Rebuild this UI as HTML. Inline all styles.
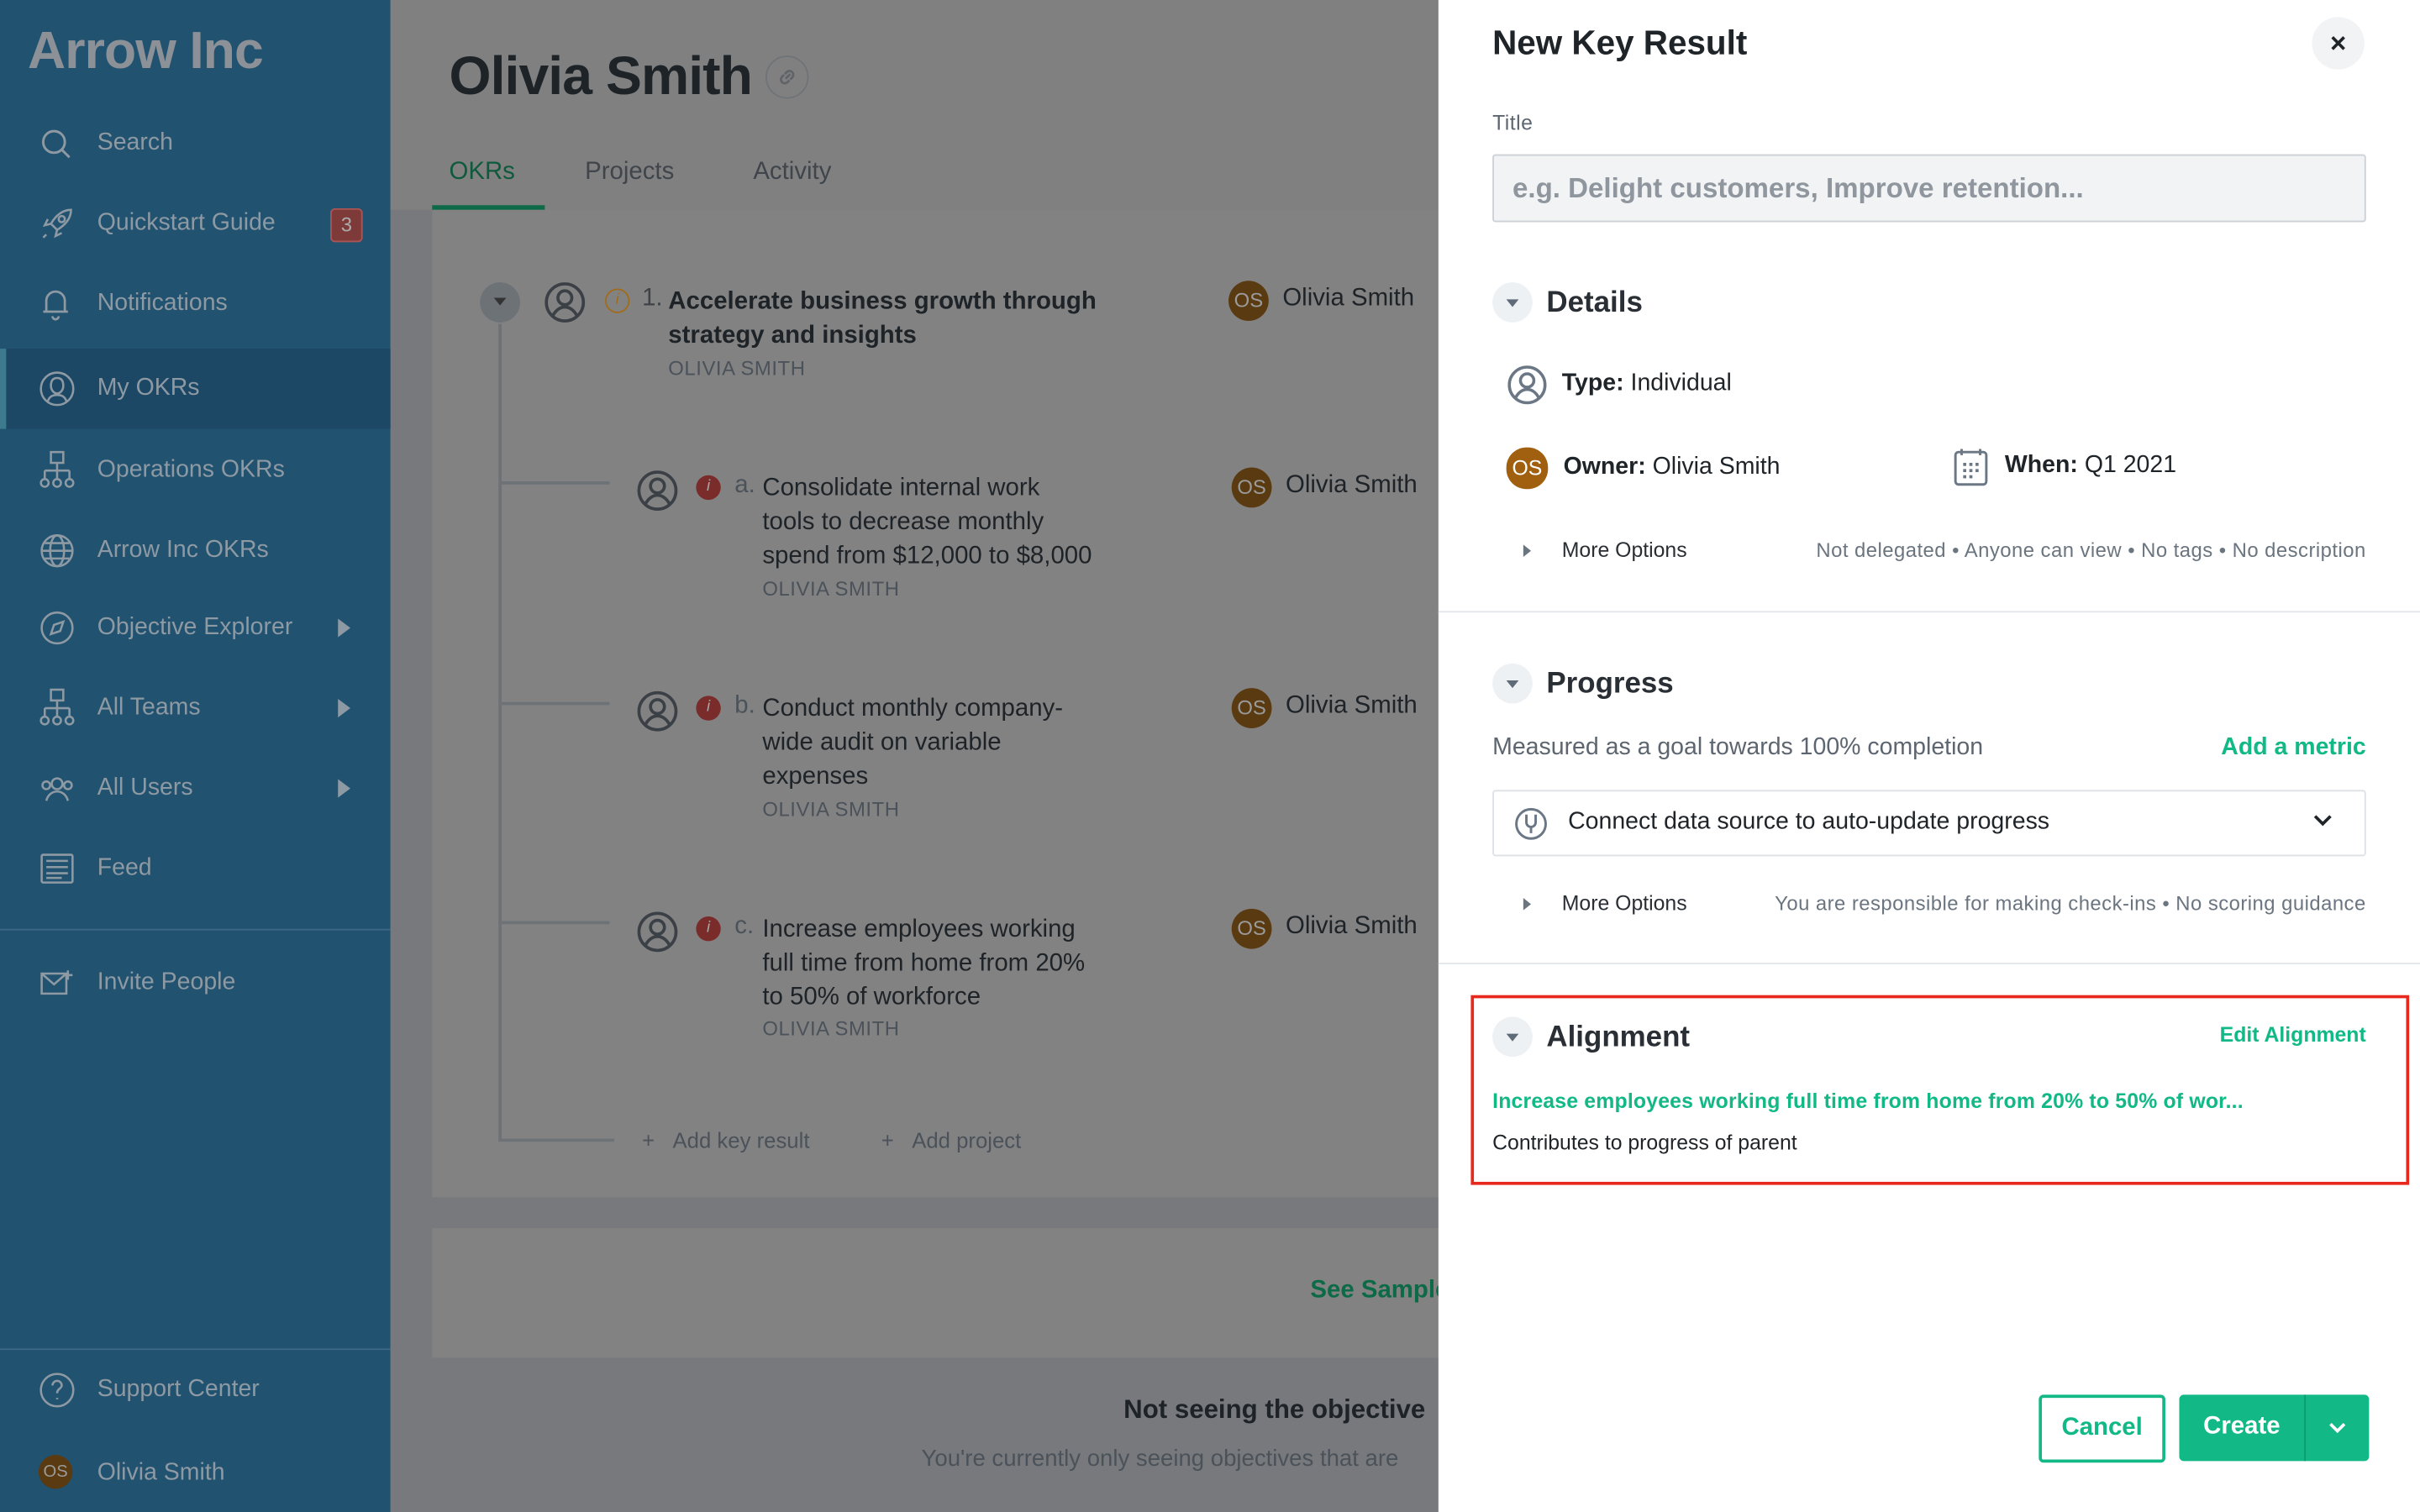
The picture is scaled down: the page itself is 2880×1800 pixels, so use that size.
<!DOCTYPE html>
<html><head><meta charset="utf-8"><style>
html,body{margin:0;padding:0;width:2880px;height:1800px;overflow:hidden;background:#7b7d80}
#w{width:1568px;height:980px;transform:scale(1.836735);transform-origin:0 0;position:relative;font-family:"Liberation Sans",sans-serif;overflow:hidden}
.abs{position:absolute;white-space:nowrap}
#side{left:0;top:0;width:253px;height:980px;background:#215270;color:#8e9aa3}
.logo{left:18px;top:14px;font-size:34px;font-weight:bold;color:#8b9197;letter-spacing:-0.5px}
.ni{position:absolute;left:0;width:253px;height:50px;font-size:15.5px;color:#8d99a3}
.ni span{position:absolute;left:63px;top:50%;transform:translateY(-50%)}
.ni svg{position:absolute;left:25px;top:50%;transform:translateY(-50%)}
.arr{position:absolute;left:219px;top:50%;margin-top:-6px;border-left:8px solid #8d99a3;border-top:6px solid transparent;border-bottom:6px solid transparent}
#main{left:253px;top:0;width:680px;height:980px;background:#77797c}
.hdr{left:0;top:0;width:680px;height:136px;background:#808080}
.card{background:#828282}
.t{color:#1e2328}
.g{color:#4b525a}
.wrap{white-space:normal}
#panel{left:932px;top:0;width:636px;height:980px;background:#fff;color:#1f2429}
.sec{font-size:19px;font-weight:bold;color:#2a2f35}
.cv{position:absolute;width:26px;height:26px;border-radius:13px;background:#eef1f4}
.cv:after{content:"";position:absolute;left:9px;top:11px;border-top:5px solid #5f6b78;border-left:4px solid transparent;border-right:4px solid transparent}
.small{font-size:13px;color:#6b7580;letter-spacing:0.25px}
.green{color:#12b886}
.tri{position:absolute;border-left:5px solid #6b7580;border-top:4px solid transparent;border-bottom:4px solid transparent}
.av{position:absolute;width:26px;height:26px;border-radius:13px;background:#a0600f;color:#fff;font-size:13px;text-align:center;line-height:26px}
.avd{background:#5a3a10;color:#9a9a9a}
</style></head><body><div id="w">
<div id="side" class="abs">
<div class="abs logo">Arrow Inc</div>
<div class="ni" style="top:68px"><svg width="22" height="22" viewBox="0 0 22 22" fill="none" stroke="#8d99a3" stroke-width="1.6"><circle cx="10" cy="10" r="7"/><path d="M15 15l5 5"/></svg><span>Search</span></div>
<div class="ni" style="top:120px"><svg width="24" height="24" viewBox="0 0 24 24" fill="none" stroke="#8d99a3" stroke-width="1.4"><path d="M21 3c-6 0-10 4-13 9l4 4c5-3 9-7 9-13zM8 12l-4 1 2-4M12 16l-1 4 4-2M5 19l-2 2"/><circle cx="15" cy="9" r="2"/></svg><span>Quickstart Guide</span><div class="abs" style="left:214px;top:15px;width:19px;height:20px;background:#7e3a38;border:1px solid #a55;border-radius:3px;color:#aaa;font-size:13px;text-align:center;line-height:20px">3</div></div>
<div class="ni" style="top:172px"><svg width="22" height="22" viewBox="0 0 22 22" fill="none" stroke="#8d99a3" stroke-width="1.5"><path d="M5 16V9a6 6 0 0112 0v7H5zM3 16h16M9 19a2 2 0 004 0"/></svg><span>Notifications</span></div>
<div class="ni" style="top:226px;height:52px;background:#1c4866;border-left:4px solid #3e7a8e"><svg width="24" height="24" viewBox="0 0 24 24" fill="none" stroke="#8d99a3" stroke-width="1.4" style="left:21px"><circle cx="12" cy="12" r="10.5"/><path d="M12 5c-3 0-4 2-4 5s2 5 4 5 4-2 4-5-1-5-4-5zM6 20c1-3 3-4 6-4s5 1 6 4"/></svg><span style="left:59px">My OKRs</span></div>
<div class="ni" style="top:280px"><svg width="24" height="26" viewBox="0 0 24 26" fill="none" stroke="#8d99a3" stroke-width="1.4"><rect x="8" y="1" width="8" height="7"/><path d="M12 8v5M4 13h16M4 13v5M12 13v5M20 13v5"/><circle cx="4" cy="21" r="2.5"/><circle cx="12" cy="21" r="2.5"/><circle cx="20" cy="21" r="2.5"/></svg><span>Operations OKRs</span></div>
<div class="ni" style="top:332px"><svg width="24" height="24" viewBox="0 0 24 24" fill="none" stroke="#8d99a3" stroke-width="1.4"><circle cx="12" cy="12" r="10"/><ellipse cx="12" cy="12" rx="4.5" ry="10"/><path d="M2 12h20M4 7h16M4 17h16"/></svg><span>Arrow Inc OKRs</span></div>
<div class="ni" style="top:382px"><svg width="24" height="24" viewBox="0 0 24 24" fill="none" stroke="#8d99a3" stroke-width="1.4"><circle cx="12" cy="12" r="10"/><path d="M16 8l-2 6-6 2 2-6z"/></svg><span>Objective Explorer</span><div class="arr"></div></div>
<div class="ni" style="top:434px"><svg width="24" height="26" viewBox="0 0 24 26" fill="none" stroke="#8d99a3" stroke-width="1.4"><rect x="8" y="1" width="8" height="7"/><path d="M12 8v5M4 13h16M4 13v5M12 13v5M20 13v5"/><circle cx="4" cy="21" r="2.5"/><circle cx="12" cy="21" r="2.5"/><circle cx="20" cy="21" r="2.5"/></svg><span>All Teams</span><div class="arr"></div></div>
<div class="ni" style="top:486px"><svg width="24" height="22" viewBox="0 0 24 22" fill="none" stroke="#8d99a3" stroke-width="1.4"><circle cx="12" cy="8" r="3.5"/><path d="M5 19c1-4 4-6 7-6s6 2 7 6"/><circle cx="5" cy="9" r="2.5"/><circle cx="19" cy="9" r="2.5"/></svg><span>All Users</span><div class="arr"></div></div>
<div class="ni" style="top:538px"><svg width="24" height="22" viewBox="0 0 24 22" fill="none" stroke="#8d99a3" stroke-width="1.4"><rect x="2" y="2" width="20" height="18" rx="1"/><path d="M5 6h14M5 10h14M5 14h14M5 17h10"/></svg><span>Feed</span></div>
<div class="abs" style="left:0;top:602px;width:253px;height:1px;background:#3d6885"></div>
<div class="ni" style="top:612px"><svg width="24" height="20" viewBox="0 0 24 20" fill="none" stroke="#8d99a3" stroke-width="1.4"><path d="M2 4h16v13H2zM2 4l8 7 8-7M19 2v6M16 5h6"/></svg><span>Invite People</span></div>
<div class="abs" style="left:0;top:874px;width:253px;height:1px;background:#3d6885"></div>
<div class="ni" style="top:876px"><svg width="24" height="24" viewBox="0 0 24 24" fill="none" stroke="#8d99a3" stroke-width="1.4"><circle cx="12" cy="12" r="10.5"/><path d="M9 9a3 3 0 116 0c0 2-3 2-3 5M12 17v1"/></svg><span>Support Center</span></div>
<div class="ni" style="top:930px"><div class="av avd" style="left:25px;top:13px;width:22px;height:22px;line-height:22px;font-size:11px">OS</div><span>Olivia Smith</span></div>
</div>

<div id="main" class="abs">
<div class="abs hdr"></div>
<div class="abs t" style="left:38px;top:30px;font-size:35px;font-weight:bold;letter-spacing:-0.5px">Olivia Smith</div>
<div class="abs" style="left:243px;top:36px;width:26px;height:26px;border:1px solid #6f7378;border-radius:14px"></div>
<svg class="abs" style="left:249px;top:42px" width="16" height="16" viewBox="0 0 16 16" fill="none" stroke="#5f6469" stroke-width="1.5"><path d="M7 9l3-3M6 6.5L4.5 8a2.5 2.5 0 003.5 3.5L9.5 10M10 9.5L11.5 8A2.5 2.5 0 008 4.5L6.5 6"/></svg>
<div class="abs" style="left:38px;top:103px;font-size:16px;color:#0f5a3d">OKRs</div>
<div class="abs" style="left:27px;top:133px;width:73px;height:3px;background:#0d6a47"></div>
<div class="abs g" style="left:126px;top:103px;font-size:16px;color:#3f454b">Projects</div>
<div class="abs g" style="left:235px;top:103px;font-size:16px;color:#3f454b">Activity</div>
<div class="abs card" style="left:27px;top:136px;width:660px;height:640px"></div>
<div class="abs" style="left:70px;top:210px;width:2px;height:528px;background:#6d7277"></div>
<div class="abs" style="left:70px;top:738px;width:75px;height:2px;background:#6d7277"></div>
<div class="abs" style="left:58px;top:183px;width:26px;height:26px;border-radius:13px;background:#6d7277"></div>
<div class="abs" style="left:67px;top:193px;border-top:5px solid #333;border-left:4px solid transparent;border-right:4px solid transparent"></div>
<svg class="abs" style="left:99px;top:182px" width="28" height="28" viewBox="0 0 28 28" fill="none" stroke="#3a4046" stroke-width="2"><circle cx="14" cy="14" r="12"/><circle cx="14" cy="11" r="4.5"/><path d="M6 23c2-4 5-6 8-6s6 2 8 6"/></svg>
<div class="abs" style="left:139px;top:187px;width:14px;height:14px;border:1.5px solid #a16c1a;border-radius:9px;color:#a16c1a;font-size:10px;text-align:center;line-height:14px;font-style:italic">i</div>
<div class="abs" style="left:163px;top:185px;font-size:16px;color:#3d4349">1.</div>
<div class="abs t wrap" style="left:180px;top:185px;font-size:16px;font-weight:bold;line-height:22px;width:290px">Accelerate business growth through strategy and insights</div>
<div class="abs g" style="left:180px;top:231px;font-size:13px;letter-spacing:0.3px">OLIVIA SMITH</div>
<div class="av avd" style="left:543px;top:182px">OS</div>
<div class="abs t" style="left:578px;top:185px;font-size:16px">Olivia Smith</div>

<div class="abs" style="left:72px;top:312px;width:70px;height:2px;background:#6d7277"></div>
<div class="abs" style="left:72px;top:455px;width:70px;height:2px;background:#6d7277"></div>
<div class="abs" style="left:72px;top:597px;width:70px;height:2px;background:#6d7277"></div>

<svg class="abs" style="left:159px;top:304px" width="28" height="28" viewBox="0 0 28 28" fill="none" stroke="#3a4046" stroke-width="2"><circle cx="14" cy="14" r="12"/><circle cx="14" cy="11" r="4.5"/><path d="M6 23c2-4 5-6 8-6s6 2 8 6"/></svg>
<div class="abs" style="left:198px;top:308px;width:16px;height:16px;border-radius:8px;background:#7a2c2a;color:#aaa;font-size:10px;text-align:center;line-height:16px;font-style:italic">i</div>
<div class="abs g" style="left:223px;top:306px;font-size:16px">a.</div>
<div class="abs t wrap" style="left:241px;top:306px;font-size:16px;line-height:22px;width:215px">Consolidate internal work tools to decrease monthly spend from $12,000 to $8,000</div>
<div class="abs g" style="left:241px;top:374px;font-size:13px;letter-spacing:0.3px">OLIVIA SMITH</div>
<div class="av avd" style="left:545px;top:303px">OS</div>
<div class="abs t" style="left:580px;top:306px;font-size:16px">Olivia Smith</div>

<svg class="abs" style="left:159px;top:447px" width="28" height="28" viewBox="0 0 28 28" fill="none" stroke="#3a4046" stroke-width="2"><circle cx="14" cy="14" r="12"/><circle cx="14" cy="11" r="4.5"/><path d="M6 23c2-4 5-6 8-6s6 2 8 6"/></svg>
<div class="abs" style="left:198px;top:451px;width:16px;height:16px;border-radius:8px;background:#7a2c2a;color:#aaa;font-size:10px;text-align:center;line-height:16px;font-style:italic">i</div>
<div class="abs g" style="left:223px;top:449px;font-size:16px">b.</div>
<div class="abs t wrap" style="left:241px;top:449px;font-size:16px;line-height:22px;width:210px">Conduct monthly company-wide audit on variable expenses</div>
<div class="abs g" style="left:241px;top:517px;font-size:13px;letter-spacing:0.3px">OLIVIA SMITH</div>
<div class="av avd" style="left:545px;top:446px">OS</div>
<div class="abs t" style="left:580px;top:449px;font-size:16px">Olivia Smith</div>

<svg class="abs" style="left:159px;top:590px" width="28" height="28" viewBox="0 0 28 28" fill="none" stroke="#3a4046" stroke-width="2"><circle cx="14" cy="14" r="12"/><circle cx="14" cy="11" r="4.5"/><path d="M6 23c2-4 5-6 8-6s6 2 8 6"/></svg>
<div class="abs" style="left:198px;top:594px;width:16px;height:16px;border-radius:8px;background:#7a2c2a;color:#aaa;font-size:10px;text-align:center;line-height:16px;font-style:italic">i</div>
<div class="abs g" style="left:223px;top:592px;font-size:16px">c.</div>
<div class="abs t wrap" style="left:241px;top:592px;font-size:16px;line-height:22px;width:225px">Increase employees working full time from home from 20% to 50% of workforce</div>
<div class="abs g" style="left:241px;top:659px;font-size:13px;letter-spacing:0.3px">OLIVIA SMITH</div>
<div class="av avd" style="left:545px;top:589px">OS</div>
<div class="abs t" style="left:580px;top:592px;font-size:16px">Olivia Smith</div>

<div class="abs g" style="left:163px;top:731px;font-size:14px">+&nbsp;&nbsp;&nbsp;Add key result</div>
<div class="abs g" style="left:318px;top:731px;font-size:14px">+&nbsp;&nbsp;&nbsp;Add project</div>

<div class="abs card" style="left:27px;top:796px;width:660px;height:84px"></div>
<div class="abs" style="left:596px;top:828px;font-size:16px;font-weight:bold;color:#0d6a47">See Sample</div>
<div class="abs t" style="left:475px;top:904px;font-size:17px;font-weight:bold">Not seeing the objective</div>
<div class="abs g" style="left:344px;top:937px;font-size:15px">You're currently only seeing objectives that are</div>
</div>

<div id="panel" class="abs">
<div class="abs" style="left:35px;top:15px;font-size:22px;font-weight:bold;color:#1f2429">New Key Result</div>
<div class="abs" style="left:566px;top:11px;width:34px;height:34px;border-radius:17px;background:#f1f3f5;text-align:center;line-height:34px;font-size:18px;font-weight:bold">×</div>
<div class="abs small" style="left:35px;top:72px;color:#5d6670;font-size:13.5px">Title</div>
<div class="abs" style="left:35px;top:100px;width:564px;height:42px;border:1px solid #ccd1d6;background:#f1f3f5;border-radius:2px"></div>
<div class="abs" style="left:48px;top:112px;font-size:18px;color:#8f969d;font-weight:bold">e.g. Delight customers, Improve retention...</div>

<div class="cv" style="left:35px;top:183px"></div>
<div class="abs sec" style="left:70px;top:186px">Details</div>
<svg class="abs" style="left:44px;top:236px" width="27" height="27" viewBox="0 0 28 28" fill="none" stroke="#6b7785" stroke-width="2"><circle cx="14" cy="14" r="12"/><circle cx="14" cy="11" r="4.5"/><path d="M6 23c2-4 5-6 8-6s6 2 8 6"/></svg>
<div class="abs" style="left:80px;top:240px;font-size:15.5px"><b style="font-weight:600">Type:</b> Individual</div>
<div class="av" style="left:44px;top:290px;width:27px;height:27px;line-height:27px;font-size:13.5px">OS</div>
<div class="abs" style="left:81px;top:294px;font-size:15.5px"><b style="font-weight:600">Owner:</b> Olivia Smith</div>
<svg class="abs" style="left:334px;top:290px" width="22" height="26" viewBox="0 0 22 26" fill="none" stroke="#6b7785" stroke-width="1.6"><rect x="1" y="3" width="20" height="21" rx="2"/><path d="M5 1v4M17 1v4" /><g fill="#6b7785" stroke="none"><rect x="6" y="10" width="2" height="2"/><rect x="10" y="10" width="2" height="2"/><rect x="14" y="10" width="2" height="2"/><rect x="6" y="14" width="2" height="2"/><rect x="10" y="14" width="2" height="2"/><rect x="14" y="14" width="2" height="2"/><rect x="6" y="18" width="2" height="2"/><rect x="10" y="18" width="2" height="2"/></g></svg>
<div class="abs" style="left:367px;top:293px;font-size:15.5px"><b style="font-weight:600">When:</b> Q1 2021</div>
<div class="tri" style="left:55px;top:353px"></div>
<div class="abs" style="left:80px;top:349px;font-size:13.5px;color:#2a2f35">More Options</div>
<div class="abs small" style="right:35px;top:349px">Not delegated • Anyone can view • No tags • No description</div>
<div class="abs" style="left:0;top:396px;width:636px;height:1px;background:#e3e6ea"></div>

<div class="cv" style="left:35px;top:430px"></div>
<div class="abs sec" style="left:70px;top:433px">Progress</div>
<div class="abs" style="left:35px;top:476px;font-size:15.5px;color:#5d6670">Measured as a goal towards 100% completion</div>
<div class="abs green" style="right:35px;top:476px;font-size:15.5px;font-weight:bold">Add a metric</div>
<div class="abs" style="left:35px;top:512px;width:564px;height:41px;border:1px solid #dde1e5;border-radius:2px"></div>
<svg class="abs" style="left:49px;top:523px" width="22" height="22" viewBox="0 0 22 22" fill="none" stroke="#6b7785" stroke-width="1.6"><circle cx="11" cy="11" r="9.5"/><path d="M8 5v5a3 3 0 006 0V5M11 13v4" /></svg>
<div class="abs" style="left:84px;top:524px;font-size:15.5px;color:#1f2429">Connect data source to auto-update progress</div>
<svg class="abs" style="left:566px;top:527px" width="14" height="10" viewBox="0 0 14 10" fill="none" stroke="#1f2429" stroke-width="2"><path d="M2 2l5 5 5-5"/></svg>
<div class="tri" style="left:55px;top:582px"></div>
<div class="abs" style="left:80px;top:578px;font-size:13.5px;color:#2a2f35">More Options</div>
<div class="abs small" style="right:35px;top:578px">You are responsible for making check-ins • No scoring guidance</div>
<div class="abs" style="left:0;top:624px;width:636px;height:1px;background:#e3e6ea"></div>

<div class="abs" style="left:21px;top:645px;width:604px;height:119px;border:2px solid #e8281c"></div>
<div class="cv" style="left:35px;top:659px"></div>
<div class="abs sec" style="left:70px;top:662px">Alignment</div>
<div class="abs green" style="right:35px;top:663px;font-size:13.5px;font-weight:bold">Edit Alignment</div>
<div class="abs green" style="left:35px;top:706px;font-size:13.5px;font-weight:bold;letter-spacing:0.1px">Increase employees working full time from home from 20% to 50% of wor...</div>
<div class="abs" style="left:35px;top:733px;font-size:13.5px;color:#1f2429">Contributes to progress of parent</div>

<div class="abs" style="left:389px;top:904px;width:78px;height:40px;border:2px solid #12b886;border-radius:3px;color:#12b886;font-size:16px;font-weight:bold;text-align:center;line-height:40px">Cancel</div>
<div class="abs" style="left:480px;top:904px;width:123px;height:43px;background:#12b886;border-radius:3px"></div>
<div class="abs" style="left:480px;top:916px;width:81px;text-align:center;color:#fff;font-size:16px;font-weight:bold">Create</div>
<div class="abs" style="left:561px;top:904px;width:1px;height:43px;background:#0e9a70"></div>
<svg class="abs" style="left:576px;top:921px" width="13" height="9" viewBox="0 0 13 9" fill="none" stroke="#fff" stroke-width="2"><path d="M2 2l4.5 4.5L11 2"/></svg>
</div>
</div></body></html>
